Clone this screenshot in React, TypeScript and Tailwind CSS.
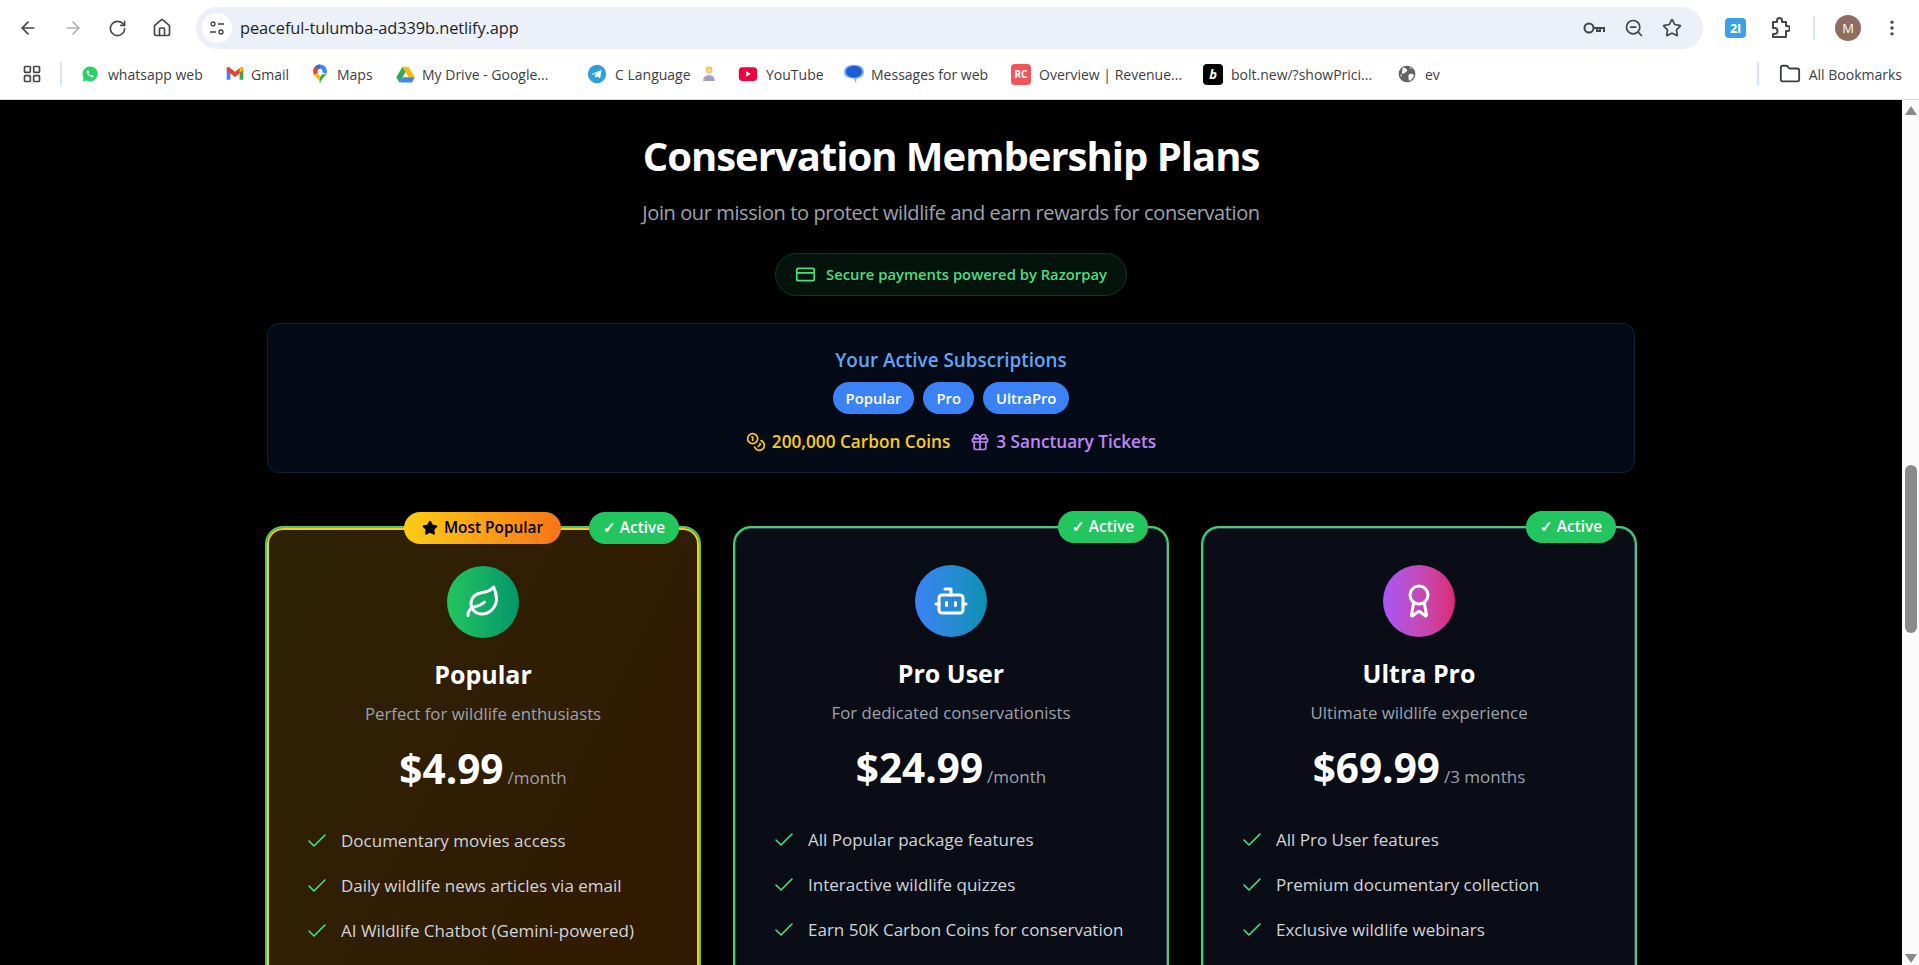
import React from 'react';
import {
  ArrowLeft,
  ArrowRight,
  Award,
  Bot,
  Check,
  Coins,
  CreditCard,
  EllipsisVertical,
  Folder,
  Gift,
  House,
  LayoutGrid,
  Leaf,
  RotateCw,
  Star,
  ZoomOut,
} from 'lucide-react';

const WhatsappIcon = () => (
  <svg viewBox="0 0 24 24" className="w-[18px] h-[18px]">
    <path d="M12 2a10 10 0 0 0-8.600 15L2 22l5.200-1.400A10 10 0 1 0 12 2z" fill="#25d366" />
    <path d="M8.600 7.200c-.5.3-1.200 1.200-1 2.400.4 2.600 3.800 6 6.600 6.800 1.300.3 2.400-.4 2.700-1.200.2-.5.1-.9-.1-1l-2-1c-.3-.1-.5 0-.7.2l-.7.9c-1.300-.4-3-2-3.600-3.400l.7-.8c.2-.2.2-.4.1-.7l-.9-2c-.2-.3-.7-.4-1.100-.2z" fill="#fff" />
  </svg>
);

const GmailIcon = () => (
  <svg viewBox="0 0 24 24" className="w-5 h-5">
    <path d="M2 7v12h4.500V10.500z" fill="#4285f4" />
    <path d="M17.500 10.500V19H22V7z" fill="#34a853" />
    <path d="M2 5.500V8l10 7.500L22 8V5.500c0-1.500-1.800-2.400-3-1.500l-7 5.200L5 4c-1.200-.9-3 0-3 1.500z" fill="#ea4335" />
    <path d="M17.500 5.900v4.600L22 7.500v-2c0-1.500-1.800-2.400-3-1.500z" fill="#fbbc04" />
  </svg>
);

const MapsIcon = () => (
  <svg viewBox="0 0 24 24" className="w-[22px] h-[22px]">
    <path d="M12 1.500c-4.200 0-7.500 3.200-7.500 7.500 0 1.500.5 2.900 1.300 4.100L12 9z" fill="#ea4335" />
    <path d="M12 1.500c-2.100 0-4 .8-5.300 2.200L12 9z" fill="#1a73e8" />
    <path d="M12 1.500c4.200 0 7.500 3.200 7.500 7.500 0 1-.2 2-.6 3L12 9z" fill="#4285f4" />
    <path d="M5.800 13.100c2 2.800 5.200 4.800 6.200 9.400l2-6.500-5-5z" fill="#fbbc04" />
    <path d="M18.900 12C17 15.500 13 17.500 12 22.500c0 0 0-4 0-6.500l2-3.500z" fill="#34a853" />
    <circle cx="12" cy="9" r="2.700" fill="#fff" />
  </svg>
);

const DriveIcon = () => (
  <svg viewBox="0 0 24 24" className="w-[21px] h-[21px]">
    <path d="M8.500 3h7l7 12h-7z" fill="#fbbc04" />
    <path d="M8.500 3 1.500 15l3.500 6 7-12z" fill="#34a853" />
    <path d="M5 21h14.500l3-6H8.500z" fill="#4285f4" />
  </svg>
);

const TelegramIcon = () => (
  <svg viewBox="0 0 24 24" className="w-[22px] h-[22px]">
    <circle cx="12" cy="12" r="10" fill="#2aa1da" />
    <path d="M6 12l11-4.500-1.700 9.500-3.500-2.500-1.700 1.700-.4-3 5-4.200-6.200 3.700z" fill="#fff" />
  </svg>
);

const CoderEmoji = () => (
  <svg viewBox="0 0 16 18" className="w-4 h-[18px]">
    <circle cx="8" cy="5" r="3.400" fill="#f4c542" />
    <circle cx="8" cy="5.500" r="2.200" fill="#f7d7a8" />
    <path d="M2 16c0-4 2.500-6 6-6s6 2 6 6z" fill="#b7a6d9" />
    <rect x="4" y="12" width="8" height="4" fill="#9ca3af" />
  </svg>
);

const YoutubeIcon = () => (
  <svg viewBox="0 0 24 24" className="w-[22px] h-[22px]">
    <rect x="2" y="4.500" width="20" height="15" rx="4" fill="#f0003c" />
    <path d="M10 9l5 3-5 3z" fill="#fff" />
  </svg>
);

const MessagesIcon = () => (
  <svg viewBox="0 0 24 24" className="w-[22px] h-[24px]">
    <path d="M12 2c5.500 0 11 2 11 8 0 4.500-4.500 6.500-8 7l-1 5-2-5C6 17 1 15 1 10c0-6 5.500-8 11-8z" fill="#8ab4f8" />
    <ellipse cx="12" cy="9.500" rx="9" ry="6.500" fill="#1a5fd0" />
  </svg>
);

const RevenueIcon = () => (
  <span className="w-5 h-[21px] rounded bg-[#f2545b] text-white text-[10px] font-bold leading-[21px] text-center">RC</span>
);

const BoltIcon = () => (
  <span className="w-5 h-[21px] rounded bg-black text-white text-[13px] italic font-bold leading-[21px] text-center">b</span>
);

const EvGlobe = () => (
  <svg viewBox="0 0 24 24" className="w-5 h-5">
    <circle cx="12" cy="12" r="10" fill="#5f6368" />
    <path d="M7 4c2 1 4 1 5 3s-2 3-3 4-3 0-4 1-1 3 0 4M15 12c2-1 4 0 5 1s-1 4-3 6-3 1-3-1-1-5 1-6zM15 3c0 2 1 3 3 3" fill="#fff" />
  </svg>
);

const PasswordKeyIcon = () => (
  <svg viewBox="0 0 24 16" className="w-6 h-4" fill="none" stroke="#444746" strokeWidth="2">
    <circle cx="7" cy="8" r="4.500" />
    <path d="M11.500 8H22v4M18 8v3h-3V8" />
  </svg>
);

const ExtensionIcon = () => (
  <svg viewBox="0 0 20 22" className="w-5 h-[22px]" fill="none" stroke="#444746" strokeWidth="2" strokeLinejoin="round">
    <path d="M3 5h4V3.500a2.500 2.500 0 0 1 5 0V5h4v4h1.500a2.500 2.500 0 0 1 0 5H16v6H3v-3h1.500a3 3 0 0 0 0-6H3z" />
  </svg>
);

const bookmarks = [
  { label: 'whatsapp web', icon: <WhatsappIcon />, width: 'w-[95px]', gap: 'gap-[9px]', next: 'mr-[22px]' },
  { label: 'Gmail', icon: <GmailIcon />, width: 'w-[37px]', gap: 'gap-1.5', next: 'mr-[21px]' },
  { label: 'Maps', icon: <MapsIcon />, width: 'w-[36px]', gap: 'gap-1.5', next: 'mr-[22px]' },
  { label: 'My Drive - Google...', icon: <DriveIcon />, width: 'w-[132px]', gap: 'gap-1.5', next: 'mr-8' },
  { label: 'C Language', icon: <TelegramIcon />, width: 'w-[77px]', gap: 'gap-[7px]', next: 'mr-[9px]' },
];

const bookmarksAfter = [
  { label: 'YouTube', icon: <YoutubeIcon />, width: 'w-[56px]', gap: 'gap-[7px]', next: 'mr-[21px]' },
  { label: 'Messages for web', icon: <MessagesIcon />, width: 'w-[119px]', gap: 'gap-1.5', next: 'mr-[21px]' },
  { label: 'Overview | Revenue...', icon: <RevenueIcon />, width: 'w-[140px]', gap: 'gap-2', next: 'mr-6' },
  { label: 'bolt.new/?showPrici...', icon: <BoltIcon />, width: 'w-[143px]', gap: 'gap-2', next: 'mr-[23px]' },
];

const plans = [
  {
    name: 'Popular',
    description: 'Perfect for wildlife enthusiasts',
    price: '$4.99',
    period: '/month',
    icon: Leaf,
    iconBg: 'bg-gradient-to-r from-[#22c55e] to-[#059669]',
    popular: true,
    features: ['Documentary movies access', 'Daily wildlife news articles via email', 'AI Wildlife Chatbot (Gemini-powered)'],
  },
  {
    name: 'Pro User',
    description: 'For dedicated conservationists',
    price: '$24.99',
    period: '/month',
    icon: Bot,
    iconBg: 'bg-gradient-to-r from-[#3b82f6] to-[#0891b2]',
    popular: false,
    features: ['All Popular package features', 'Interactive wildlife quizzes', 'Earn 50K Carbon Coins for conservation'],
  },
  {
    name: 'Ultra Pro',
    description: 'Ultimate wildlife experience',
    price: '$69.99',
    period: '/3 months',
    icon: Award,
    iconBg: 'bg-gradient-to-r from-[#a855f7] to-[#db2777]',
    popular: false,
    features: ['All Pro User features', 'Premium documentary collection', 'Exclusive wildlife webinars'],
  },
];

function BrowserChrome() {
  return (
    <div className="bg-white shrink-0 border-b border-[#d9d9d9] text-[#3c4043]">
      <div className="h-[49px] flex items-center pt-[7px]">
        <div className="flex items-center w-[196px] pl-[18px] gap-[25px] text-[#444746]">
          <ArrowLeft className="w-5 h-5" />
          <ArrowRight className="w-5 h-5 text-[#b0b2b5]" />
          <RotateCw className="w-[19px] h-[19px]" />
          <House className="w-5 h-5" />
        </div>
        <div className="w-[1507px] h-[42px] bg-[#ebf0f9] rounded-full flex items-center pl-[6px] pr-[21px]">
          <div className="w-[30px] h-[30px] bg-white rounded-full flex items-center justify-center">
            <svg viewBox="0 0 16 16" className="w-4 h-4 text-[#3c4043]" fill="none" stroke="currentColor" strokeWidth="1.300">
              <circle cx="4" cy="4" r="2" />
              <path d="M9 4h6M1 12h6" />
              <circle cx="12" cy="12" r="2" />
            </svg>
          </div>
          <span className="ml-2 text-[16.400px] text-[#1f1f1f] tracking-[-0.1px]">peaceful-tulumba-ad339b.netlify.app</span>
          <div className="ml-auto flex items-center gap-[18px] text-[#444746]">
            <PasswordKeyIcon />
            <ZoomOut className="w-5 h-5" />
            <Star className="w-5 h-5" />
          </div>
        </div>
        <div className="flex items-center pl-[22px] text-[#444746]">
          <span className="w-[21px] h-5 rounded-sm bg-[#3aa0e8] text-white text-[13px] font-bold leading-5 text-center">2I</span>
          <div className="ml-[24px]">
            <ExtensionIcon />
          </div>
          <span className="w-0.5 h-6 bg-[#d3e3fd] ml-[23px]" />
          <span className="w-[26px] h-[26px] rounded-full bg-[#8d6e63] text-white text-[13px] leading-[26px] text-center ml-5">M</span>
          <EllipsisVertical className="w-5 h-5 ml-[21px]" />
        </div>
      </div>
      <div className="h-[50px] flex items-center text-[14px] text-[#3c4043]">
        <LayoutGrid className="w-5 h-5 ml-[22px] text-[#444746]" />
        <span className="w-0.5 h-6 bg-[#d3e3fd] ml-[18px] mr-[19px]" />
        {bookmarks.map((b) => (
          <div key={b.label} className={`flex items-center ${b.gap} ${b.next}`}>
            {b.icon}
            <span className={`${b.width} whitespace-nowrap`}>{b.label}</span>
          </div>
        ))}
        <div className="mr-5">
          <CoderEmoji />
        </div>
        {bookmarksAfter.map((b) => (
          <div key={b.label} className={`flex items-center ${b.gap} ${b.next}`}>
            {b.icon}
            <span className={`${b.width} whitespace-nowrap`}>{b.label}</span>
          </div>
        ))}
        <EvGlobe />
        <span className="ml-2">ev</span>
        <div className="ml-auto flex items-center pr-[17px]">
          <span className="w-0.5 h-6 bg-[#d3e3fd] mr-[20px]" />
          <Folder className="w-[22px] h-[22px] mr-2" />
          <span>All Bookmarks</span>
        </div>
      </div>
    </div>
  );
}

function PlanCard({ plan }: { plan: (typeof plans)[number] }) {
  const Icon = plan.icon;
  return (
    <div
      className={`relative h-[850px] rounded-2xl ring-2 ring-[#42cf72] px-9 pt-9 ${
        plan.popular
          ? 'border-2 border-[#facc15] bg-gradient-to-br from-[#2d2206] to-[#331600]'
          : 'border border-[#374151] bg-[#0a0d16]'
      }`}
    >
      {plan.popular && (
        <span className="absolute -top-[18px] left-[135px] h-8 w-[157px] rounded-full bg-gradient-to-r from-[#facc15] to-[#f97316] text-black text-[15.400px] font-semibold flex items-center justify-center gap-1.5">
          <Star className="w-4 h-4 fill-black" /> Most Popular
        </span>
      )}
      <span className="absolute -top-[18px] right-[18px] h-8 w-[90px] rounded-full bg-[#22c55e] text-white text-[15.400px] font-semibold flex items-center justify-center">
        ✓ Active
      </span>
      <div className="flex flex-col items-center">
        <div className={`w-[72px] h-[72px] rounded-full flex items-center justify-center ${plan.iconBg}`}>
          <Icon className="w-9 h-9 text-white" />
        </div>
        <h3 className="mt-[18px] text-[25px] leading-9 font-bold text-white">{plan.name}</h3>
        <p className="mt-[10px] text-[16.800px] leading-6 text-[#9ca3af]">{plan.description}</p>
        <div className="mt-[13px] flex items-baseline gap-1 leading-none">
          <span className="text-[40.500px] leading-[60px] font-bold text-white">{plan.price}</span>
          <span className="text-[17px] text-[#9ca3af]">{plan.period}</span>
        </div>
      </div>
      <ul className="mt-[30px] flex flex-col gap-[21px]">
        {plan.features.map((feature) => (
          <li key={feature} className="flex items-center gap-3 h-6 text-[17px] text-[#d1d5db] whitespace-nowrap">
            <Check className="w-6 h-6 shrink-0 text-[#4ade80]" strokeWidth={1.6} />
            {feature}
          </li>
        ))}
      </ul>
    </div>
  );
}

export default function App() {
  return (
    <div className="h-screen w-full overflow-hidden flex flex-col bg-black font-['Open_Sans','Noto_Sans',sans-serif]">
      <BrowserChrome />
      <div className="flex-1 min-h-0 flex">
        <main className="flex-1 min-w-0 overflow-hidden bg-black">
          <div className="w-[1368px] mx-auto pt-[26px]">
            <div className="flex flex-col items-center">
              <h1 className="text-[40px] leading-[60px] font-bold text-white tracking-[-1px]">Conservation Membership Plans</h1>
              <p className="mt-[13px] text-xl leading-7 text-[#9ca3af] tracking-[-0.4px]">
                Join our mission to protect wildlife and earn rewards for conservation
              </p>
              <div className="mt-[26px] h-[43px] px-[19px] rounded-full bg-[#04140c] border border-[#0b3a20] flex items-center gap-2.5 text-[#4ade80] text-[14.800px] font-semibold">
                <CreditCard className="w-[21px] h-[21px]" />
                Secure payments powered by Razorpay
              </div>
            </div>

            <section className="mt-[27px] h-[150px] rounded-xl border border-[#10213c] bg-[#050b16] flex flex-col items-center pt-[22px]">
              <h2 className="text-[18.900px] leading-7 font-semibold text-[#60a5fa]">Your Active Subscriptions</h2>
              <div className="mt-2 flex gap-[9px]">
                {['Popular', 'Pro', 'UltraPro'].map((tag) => (
                  <span key={tag} className="h-8 px-[13px] rounded-full bg-[#3b82f6] text-white text-[14.800px] font-semibold flex items-center">
                    {tag}
                  </span>
                ))}
              </div>
              <div className="mt-[15px] flex items-center gap-5 text-[17.200px] font-semibold">
                <span className="flex items-center gap-1.5 text-[#facc15]">
                  <Coins className="w-5 h-5" /> 200,000 Carbon Coins
                </span>
                <span className="flex items-center gap-1.5 text-[#c084fc]">
                  <Gift className="w-5 h-5" /> 3 Sanctuary Tickets
                </span>
              </div>
            </section>

            <div className="mt-[55px] grid grid-cols-3 gap-9">
              {plans.map((plan) => (
                <PlanCard key={plan.name} plan={plan} />
              ))}
            </div>
          </div>
        </main>
        <div className="w-[17px] shrink-0 bg-[#fbfbfb] flex flex-col items-center">
          <span className="mt-[6px] w-0 h-0 border-x-[6px] border-x-transparent border-b-[9px] border-b-[#8a8a8a]" />
          <span className="mt-[350px] w-3 h-[168px] rounded-full bg-[#8a8a8a]" />
          <span className="mt-auto mb-[2px] w-0 h-0 border-x-[6px] border-x-transparent border-t-[9px] border-t-[#8a8a8a]" />
        </div>
      </div>
    </div>
  );
}
